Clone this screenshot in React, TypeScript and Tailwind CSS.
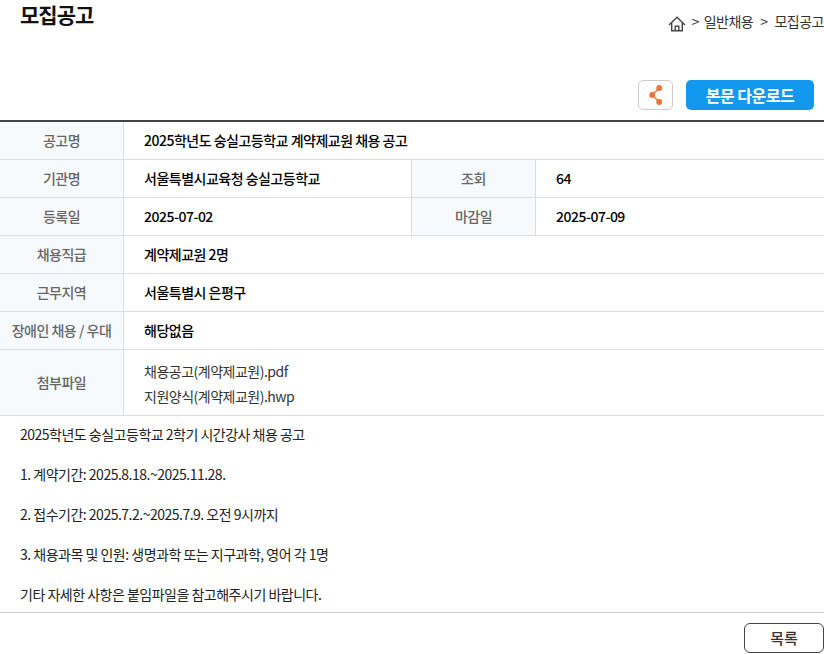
const font = { fontFamily: '"Noto Sans CJK KR", "Noto Sans", sans-serif' }

function Label({ children, className = '' }: { children: React.ReactNode; className?: string }) {
  return (
    <div className={`flex items-center justify-center bg-[#f7fafd] pb-px text-[14px] font-medium tracking-[-0.5px] text-[#666] ${className}`}>
      {children}
    </div>
  )
}

function Value({ children, className = '' }: { children: React.ReactNode; className?: string }) {
  return (
    <div className={`flex items-center px-5 pb-px text-[14px] font-medium tracking-[-0.5px] text-black ${className}`}>
      {children}
    </div>
  )
}

function Row({ label, value }: { label: string; value: string }) {
  return (
    <div className="flex h-[38px] border-b border-[#ddd]">
      <Label className="w-[124px] border-r border-[#ddd]">{label}</Label>
      <Value className="flex-1">{value}</Value>
    </div>
  )
}

function DoubleRow({ a, b, c, d }: { a: string; b: string; c: string; d: string }) {
  return (
    <div className="flex h-[38px] border-b border-[#ddd]">
      <Label className="w-[124px] border-r border-[#ddd]">{a}</Label>
      <Value className="w-[288px] border-r border-[#ddd]">{b}</Value>
      <Label className="w-[124px] border-r border-[#ddd]">{c}</Label>
      <Value className="flex-1">{d}</Value>
    </div>
  )
}

export default function App() {
  const lines = [
    '2025학년도 숭실고등학교 2학기 시간강사 채용 공고',
    '1. 계약기간: 2025.8.18.~2025.11.28.',
    '2. 접수기간: 2025.7.2.~2025.7.9. 오전 9시까지',
    '3. 채용과목 및 인원: 생명과학 또는 지구과학, 영어 각 1명',
    '기타 자세한 사항은 붙임파일을 참고해주시기 바랍니다.',
  ]

  return (
    <div className="h-[654px] w-[824px] overflow-hidden bg-white" style={font}>
      <div className="flex h-[80px] items-start justify-between pl-5">
        <h1 className="text-[21px] font-bold leading-[28px] tracking-[-1px] text-[#111]">모집공고</h1>
        <div className="mt-[11px] flex h-5 items-center whitespace-nowrap text-[14px] tracking-[-0.5px] text-[#333]">
          <svg width="18" height="16" viewBox="0 0 18 16" fill="none" stroke="#444" strokeWidth="1.4" className="mr-[5px] mt-[5px]">
            <path d="M1 9 9 1.2 17 9" />
            <path d="M3.7 6.8V14.7H14.3V6.8" />
            <path d="M7.2 14.7V10.2H10.8V14.7" />
          </svg>
          <span>&gt;</span>
          <span className="ml-[5px]">일반채용</span>
          <span className="ml-[7px]">&gt;</span>
          <span className="ml-[7px]">모집공고</span>
        </div>
      </div>

      <div className="flex h-[40px] items-start justify-end gap-[13px] pr-[10px]">
        <button className="flex h-[30px] w-[35px] items-center justify-center rounded-[5px] border border-[#ccc] bg-white">
          <svg width="16" height="20" viewBox="0 0 16 20" fill="none">
            <path d="M11.2 3 4.2 10 11.2 17" stroke="#ee7336" strokeWidth="1.3" />
            <circle cx="11.2" cy="3" r="2.9" fill="#ee7336" />
            <circle cx="4.2" cy="10" r="2.9" fill="#ee7336" />
            <circle cx="11.2" cy="17" r="2.9" fill="#ee7336" />
          </svg>
        </button>
        <button className="h-[30px] w-[128px] rounded-[5px] bg-[#1298ee] text-[16px] font-bold tracking-[-0.5px] text-white">
          본문 다운로드
        </button>
      </div>

      <div className="border-t-2 border-[#444]">
        <Row label="공고명" value="2025학년도 숭실고등학교 계약제교원 채용 공고" />
        <DoubleRow a="기관명" b="서울특별시교육청 숭실고등학교" c="조회" d="64" />
        <DoubleRow a="등록일" b="2025-07-02" c="마감일" d="2025-07-09" />
        <Row label="채용직급" value="계약제교원 2명" />
        <Row label="근무지역" value="서울특별시 은평구" />
        <Row label="장애인 채용 / 우대" value="해당없음" />
        <div className="flex h-[66px] border-b border-[#ddd]">
          <Label className="w-[124px] border-r border-[#ddd]">첨부파일</Label>
          <div className="flex flex-1 flex-col justify-center px-5 pt-[2px] text-[14px] leading-[25px] tracking-[-0.5px] text-[#333]">
            <div>채용공고(계약제교원).pdf</div>
            <div>지원양식(계약제교원).hwp</div>
          </div>
        </div>
      </div>

      <div className="flex h-[197px] flex-col gap-5 border-b border-[#ccc] px-5 pt-[8px] text-[14px] leading-[20px] tracking-[-0.5px] text-[#222]">
        {lines.map((l) => (
          <p key={l}>{l}</p>
        ))}
      </div>

      <div className="flex justify-end pt-[10px]">
        <button className="h-[30px] w-[80px] rounded-[6px] border border-[#444] bg-white text-[15px] font-medium text-[#333]">
          목록
        </button>
      </div>
    </div>
  )
}
